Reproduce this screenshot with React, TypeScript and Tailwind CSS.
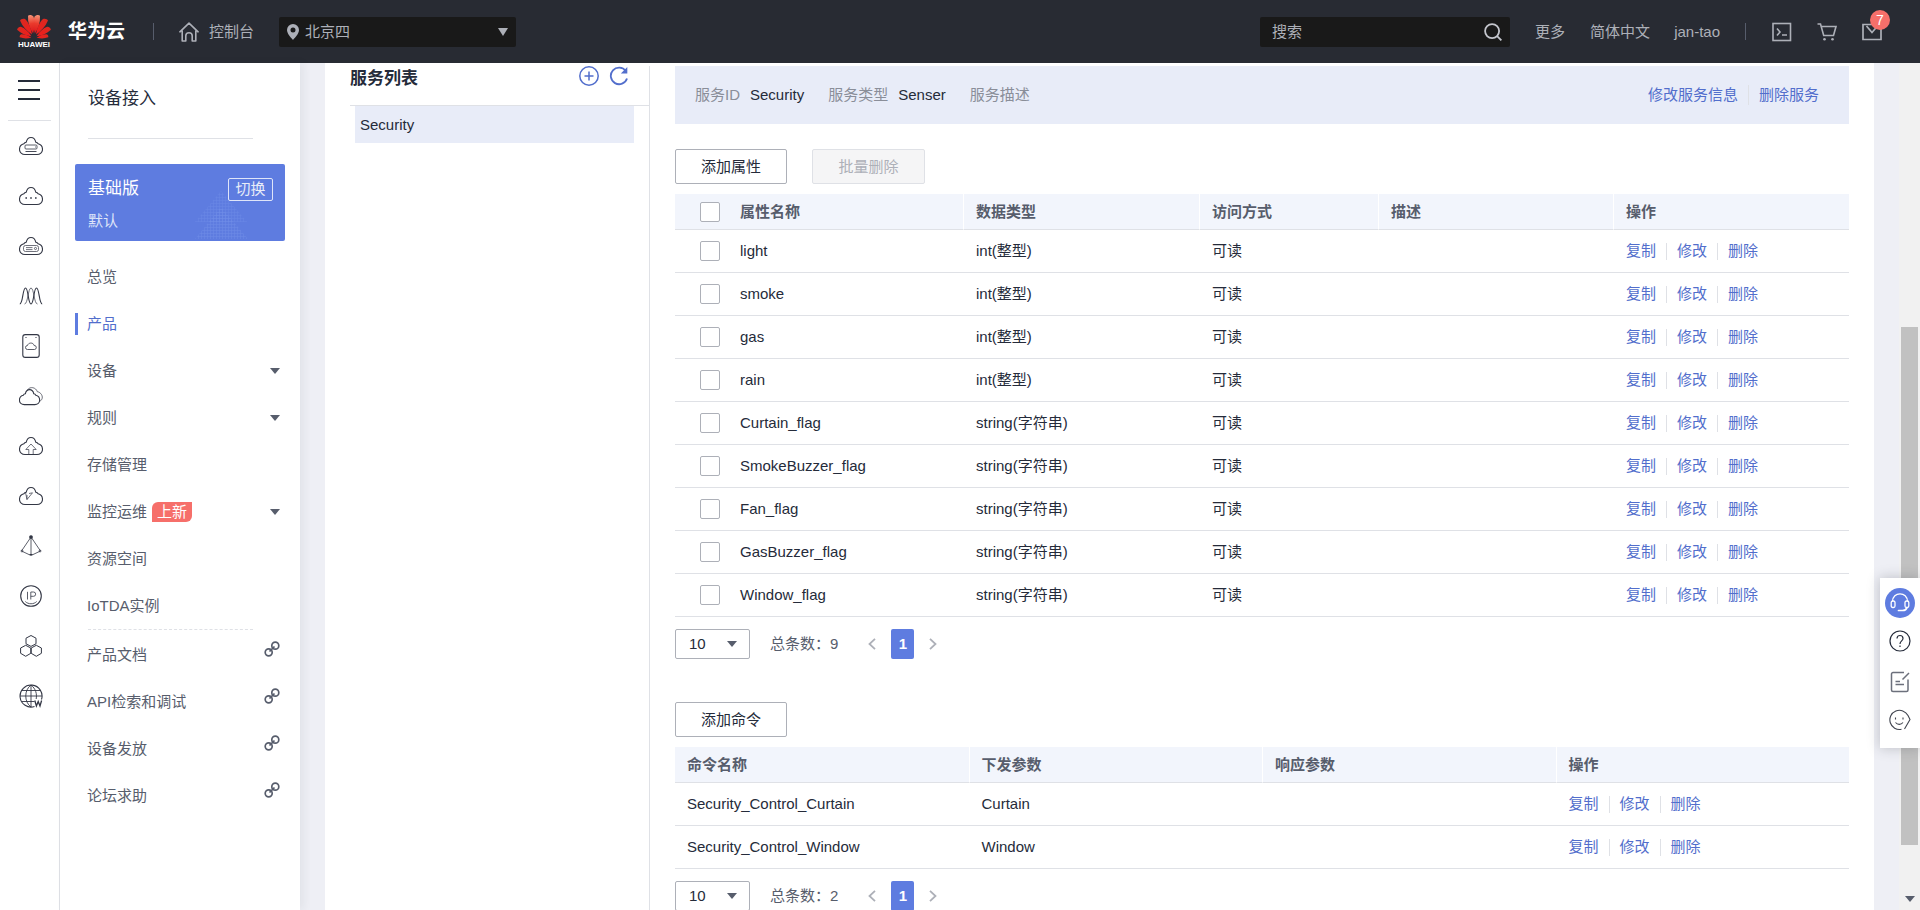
import { useState } from "react";
import type { ReactNode } from "react";

type NavItem = { label: string; active?: boolean; expandable?: boolean; badge?: string };
type Property = { name: string; type: string; access: string };
type Command = { name: string; params: string };

const navItems: NavItem[] = [
  { label: "总览" },
  { label: "产品", active: true },
  { label: "设备", expandable: true },
  { label: "规则", expandable: true },
  { label: "存储管理" },
  { label: "监控运维", badge: "上新", expandable: true },
  { label: "资源空间" },
  { label: "IoTDA实例" },
];

const externalLinks = ["产品文档", "API检索和调试", "设备发放", "论坛求助"];

const properties: Property[] = [
  { name: "light", type: "int(整型)", access: "可读" },
  { name: "smoke", type: "int(整型)", access: "可读" },
  { name: "gas", type: "int(整型)", access: "可读" },
  { name: "rain", type: "int(整型)", access: "可读" },
  { name: "Curtain_flag", type: "string(字符串)", access: "可读" },
  { name: "SmokeBuzzer_flag", type: "string(字符串)", access: "可读" },
  { name: "Fan_flag", type: "string(字符串)", access: "可读" },
  { name: "GasBuzzer_flag", type: "string(字符串)", access: "可读" },
  { name: "Window_flag", type: "string(字符串)", access: "可读" },
];

const commands: Command[] = [
  { name: "Security_Control_Curtain", params: "Curtain" },
  { name: "Security_Control_Window", params: "Window" },
];

const CLOUD =
  "M6 17.5C3 17.5.5 15.4.5 12.4C.5 9.6 2.3 7.4 4.9 6.800C5.300 5.900 6.100 5.300 7.200 5.200C7.800 2.400 9.800.5 12 .5C14.200.5 16.200 2.400 16.800 5.200C17.900 5.300 18.700 5.900 19.100 6.800C21.700 7.400 23.500 9.600 23.500 12.400C23.500 15.400 21 17.500 18 17.500Z";

function Glyph({ children, box = "0 0 24 18" }: { children: ReactNode; box?: string }) {
  return (
    <svg viewBox={box} className="h-6 w-6" fill="none" stroke="#333745" strokeWidth="1.1" aria-hidden="true">
      {children}
    </svg>
  );
}

const railIcons: { label: string; icon: ReactNode }[] = [
  {
    label: "弹性云服务器",
    icon: (
      <Glyph>
        <path d={CLOUD} />
        <rect x="6" y="8" width="12" height="4" rx="1" strokeWidth=".8" />
        <path d="M16 10h.8M6.500 14.500h11" strokeWidth=".9" />
      </Glyph>
    ),
  },
  {
    label: "云容器",
    icon: (
      <Glyph>
        <path d={CLOUD} />
        <path d="M6.400 11h1.600M11.200 11h1.600M16 11h1.600" strokeWidth="1.700" />
      </Glyph>
    ),
  },
  {
    label: "裸金属服务器",
    icon: (
      <Glyph>
        <path d={CLOUD} />
        <rect x="4.500" y="8.500" width="15" height="6" rx="2" strokeWidth=".7" />
        <path d="M7 10.600h6.500M7 12.600h6.500" strokeWidth=".7" />
        <circle cx="16.500" cy="11.500" r="1.100" strokeWidth=".7" />
      </Glyph>
    ),
  },
  {
    label: "弹性伸缩",
    icon: (
      <Glyph>
        <path d="M.8 17C4 17 3.600 1 6.500 1S9 17 12 17S14.600 1 17.500 1S20 17 23.200 17" />
        <path d="M5.500 17C9 17 9 1 12 1S15 17 18.500 17" strokeWidth=".7" />
      </Glyph>
    ),
  },
  {
    label: "云硬盘",
    icon: (
      <Glyph box="0 0 24 24">
        <rect x="3.800" y=".6" width="16.400" height="22.800" rx="2.500" />
        <path d="M8.500 15.500a2 2 0 0 1 0-4c.6-3 5.800-3.500 6.600 0a2 2 0 0 1 .4 4Z" strokeWidth=".8" />
        <path d="M6.500 3.500h1M16.500 3.500h1" />
      </Glyph>
    ),
  },
  {
    label: "云备份",
    icon: (
      <Glyph>
        <g transform="translate(0 2.200) scale(.88)">
          <path d={CLOUD} strokeWidth="1.250" />
        </g>
        <path d="M8.500 2.800C11-.8 17 .2 18.300 4.700C22 5.200 24.400 9.500 22.800 12.300C22.400 13.200 21.800 13.700 21.200 14" strokeWidth=".7" />
      </Glyph>
    ),
  },
  {
    label: "对象存储",
    icon: (
      <Glyph>
        <path d={CLOUD} />
        <path d="M9.800 17v-4.500H6.800L12 7l5.200 5.500h-3V17" strokeWidth=".7" />
      </Glyph>
    ),
  },
  {
    label: "云监控",
    icon: (
      <Glyph>
        <path d={CLOUD} />
        <path d="M6.500 5.500L8 12.500L13.500 5.800L10 6.500M8 12.500V8" strokeWidth=".7" />
      </Glyph>
    ),
  },
  {
    label: "虚拟私有云",
    icon: (
      <Glyph box="0 0 24 24">
        <path d="M12 3v18M12 3L2.500 17L12 21.500L21.500 17L12 3" strokeWidth=".8" />
        <circle cx="12" cy="3" r="1.300" fill="#333745" />
        <circle cx="3" cy="17" r="1" strokeWidth=".7" />
        <circle cx="21" cy="17" r="1" strokeWidth=".7" />
        <path d="M10.500 20.500h3" />
      </Glyph>
    ),
  },
  {
    label: "弹性公网",
    icon: (
      <Glyph box="0 0 24 24">
        <circle cx="12" cy="12" r="10.300" />
        <path d="M8.500 7.800v7.700M11.800 15.500V8H14.500a2 2 0 0 1 0 4.300H11.800M6.300 17.500C9.200 20.500 14.800 20.500 17.700 17.500" strokeWidth=".8" />
      </Glyph>
    ),
  },
  {
    label: "区块链",
    icon: (
      <Glyph box="0 0 24 24">
        <path
          d="M12 1.500L17 4.200V9.800L12 12.400L7 9.800V4.200ZM6.700 11.300L11.800 14V19.300L6.700 22.300L1.600 19.300V14ZM17.300 11.300L12.200 14V19.300L17.300 22.300L22.400 19.300V14Z"
          strokeLinejoin="round"
          strokeWidth="1"
        />
      </Glyph>
    ),
  },
  {
    label: "域名",
    icon: (
      <Glyph box="0 0 24 24">
        <path d="M15.500 22.500A11 11 0 1 1 22.500 15.500" />
        <path d="M12 1v22M1 12h22M3 6.500h18M3 17.500h12.500M12 1C5 6 5 18 12 23M12 1C17 5 18 10 17.200 15" strokeWidth=".9" />
        <path d="M15.800 16.500l1.600 5.500l1.800-4.500l1.800 4.500l1.600-5.500" strokeWidth="1.300" />
      </Glyph>
    ),
  },
];

function Caret({ className = "" }: { className?: string }) {
  return (
    <svg viewBox="0 0 10 6" className={`h-1.5 w-2.5 fill-[#575d6c] ${className}`} aria-hidden="true">
      <path d="M0 0h10L5 6Z" />
    </svg>
  );
}

function LinkIcon() {
  return (
    <svg viewBox="0 0 16 16" className="mt-2.5 size-4 self-start" fill="none" stroke="#575d6c" strokeWidth="1.700" aria-hidden="true">
      <circle cx="11.300" cy="4.700" r="3.500" />
      <circle cx="4.700" cy="11.300" r="3.500" />
      <path d="M5.500 10.500l5-5" />
    </svg>
  );
}

function Logo() {
  const petal = "M0 -2C-2.600 -8 -3.500 -14 -2.700 -18.500C-1.800 -20.500 .6 -21.400 1.900 -20.400C3.100 -14 2.400 -8 0 -2Z";
  return (
    <a href="#home" className="flex w-9 flex-col items-center gap-0.5 font-bold">
      <svg viewBox="0 0 34 25" className="h-[25px] w-[34px]" aria-hidden="true">
        <defs>
          <linearGradient id="petalTop" gradientUnits="userSpaceOnUse" x1="0" y1="-22" x2="0" y2="-2">
            <stop offset="0" stopColor="#f7a283" />
            <stop offset=".5" stopColor="#ea3a2c" />
            <stop offset="1" stopColor="#d8141a" />
          </linearGradient>
          <linearGradient id="petalSide" gradientUnits="userSpaceOnUse" x1="0" y1="-22" x2="0" y2="-2">
            <stop offset="0" stopColor="#d92a20" />
            <stop offset="1" stopColor="#f01c1c" />
          </linearGradient>
        </defs>
        {[1, -1].map((side) => (
          <g key={side} transform={`translate(17 23) scale(${side} 1)`} fill="url(#petalSide)">
            <path d={petal} transform="translate(.6 -1.500) rotate(9) scale(1.150 1)" fill="url(#petalTop)" />
            <path d={petal} transform="translate(1 -1) rotate(34) scale(1.100 .98)" />
            <path d={petal} transform="translate(1.200 0) rotate(59) scale(1 .84)" />
            <path d={petal} transform="translate(1.500 .8) rotate(82) scale(.7 .62)" />
          </g>
        ))}
      </svg>
      <span className="text-[8px] leading-2 text-white">HUAWEI</span>
    </a>
  );
}

function Header() {
  return (
    <header className="flex h-[63px] shrink-0 items-center bg-[#282b33] pl-4 text-[#adb0b8]">
      <Logo />
      <a href="#cloud" className="ml-4 text-[19px] font-bold text-white">
        华为云
      </a>
      <span className="ml-7 h-[17px] w-px bg-[#575d6c]" />
      <a href="#console" className="ml-[25px] flex items-center gap-2.5">
        <svg viewBox="0 0 20 20" className="size-5" fill="none" stroke="#adb0b8" strokeWidth="1.600" strokeLinejoin="round" strokeLinecap="round" aria-hidden="true">
          <path d="M.9 9.800L10 1.200l9.100 8.600M3.200 9v10h3.600v-5.200c0-4 6.400-4 6.400 0V19h3.600V9" />
        </svg>
        控制台
      </a>
      <label className="relative ml-[25px] flex h-[30px] w-[237px] items-center rounded-xs bg-[#191919] pl-2">
        <svg viewBox="0 0 12 16" className="h-4 w-3 shrink-0 fill-[#adb0b8]" aria-hidden="true">
          <path fillRule="evenodd" d="M6 0a6 6 0 0 1 6 6c0 3.500-3.500 7-6 10C3.500 13 0 9.500 0 6a6 6 0 0 1 6-6Zm0 3.500a2.500 2.500 0 1 0 0 5a2.500 2.500 0 0 0 0-5Z" />
        </svg>
        <select aria-label="区域" className="h-full w-full appearance-none bg-transparent pl-1.5 outline-none">
          <option>北京四</option>
        </select>
        <svg viewBox="0 0 10 8" className="pointer-events-none absolute right-2 h-2 w-2.5 fill-[#adb0b8]" aria-hidden="true">
          <path d="M0 0h10L5 8Z" />
        </svg>
      </label>

      <div className="ml-auto flex h-[30px] w-[250px] items-center rounded-xs bg-[#191919] pr-2 pl-3">
        <input aria-label="搜索" placeholder="搜索" className="min-w-0 flex-1 bg-transparent outline-none placeholder:text-[#adb0b8]" />
        <button aria-label="开始搜索">
          <svg viewBox="0 0 20 20" className="size-[18px]" fill="none" stroke="#c4c6cd" strokeWidth="2" aria-hidden="true">
            <circle cx="9" cy="9" r="7.800" />
            <path d="M14.300 14.300l5 5" />
          </svg>
        </button>
      </div>
      <a href="#more" className="ml-[25px]">更多</a>
      <a href="#lang" className="ml-[25px]">简体中文</a>
      <a href="#account" className="ml-6">jan-tao</a>
      <span className="ml-[25px] h-[17px] w-px bg-[#575d6c]" />
      <div className="mr-[38px] ml-[26px] flex items-center gap-[25px]">
        <button aria-label="命令行">
          <svg viewBox="0 0 20 20" className="size-5" fill="none" stroke="#adb0b8" strokeWidth="1.600" aria-hidden="true">
            <rect x="1" y="1.500" width="17.500" height="17" />
            <path d="M5 6.500l3 3.500l-3 3.500M10 13h5" />
          </svg>
        </button>
        <button aria-label="购物车">
          <svg viewBox="0 0 20 18" className="h-[18px] w-5" fill="none" stroke="#adb0b8" strokeWidth="1.600" aria-hidden="true">
            <path d="M.5 1h3l3.200 11.500h9.800L19 3.500H4.500" />
            <circle cx="7.500" cy="16.300" r="1.300" fill="#adb0b8" stroke="none" />
            <circle cx="15.500" cy="16.300" r="1.300" fill="#adb0b8" stroke="none" />
          </svg>
        </button>
        <button aria-label="消息" className="relative">
          <svg viewBox="0 0 20 18" className="h-[18px] w-5" fill="none" stroke="#adb0b8" strokeWidth="1.700" aria-hidden="true">
            <path d="M1 1.500h18v15H1ZM4.500 3L10 9.500l5.500-6.500" />
          </svg>
          <span className="absolute -top-[13px] left-2 size-5 rounded-full bg-[#f66f6a] text-sm leading-5 text-white">7</span>
        </button>
      </div>
    </header>
  );
}

function Rail() {
  return (
    <nav aria-label="服务" className="flex w-[60px] shrink-0 flex-col items-center border-r border-[#dfe1e6] bg-white">
      <button aria-label="菜单" className="mt-[17px] mr-0.5 flex flex-col gap-[7px]">
        <span className="h-0.5 w-[22px] bg-[#252b3a]" />
        <span className="h-0.5 w-[22px] bg-[#252b3a]" />
        <span className="h-0.5 w-[22px] bg-[#252b3a]" />
      </button>
      <div className="mt-5 h-px w-[43px] bg-[#dfe1e6]" />
      <div className="flex flex-col pl-[3px]">
        {railIcons.map((item) => (
          <a key={item.label} href="#service" aria-label={item.label} className="flex h-[50px] items-center">
            {item.icon}
          </a>
        ))}
      </div>
    </nav>
  );
}

function Sidebar() {
  return (
    <aside className="z-10 flex w-60 shrink-0 flex-col bg-white text-[#575d6c] shadow-[4px_0_8px_rgba(40,43,51,0.06)]">
      <h1 className="mx-7 h-[75px] pt-6 text-[17px] leading-6 text-[#252b3a]">设备接入</h1>
      <div className="ml-7 h-px w-[165px] bg-[#dfe1e6]" />
      <section className="relative mx-[15px] mt-[25px] mb-3 h-[77px] overflow-hidden rounded-xs bg-[#5e7ce0] px-[13px] pt-[13px] text-white">
        <svg viewBox="0 0 54 50" className="absolute right-[36px] bottom-0 h-[50px] w-[54px]" aria-hidden="true">
          <defs>
            <pattern id="mesh" width="3" height="3" patternUnits="userSpaceOnUse">
              <path d="M0 .5h3M.5 0v3" stroke="#7390e8" strokeWidth=".5" />
            </pattern>
          </defs>
          <path d="M26 0L52 31H0Z" fill="url(#mesh)" opacity=".6" />
          <path d="M26 16L53 48H0Z" fill="url(#mesh)" opacity=".75" />
        </svg>
        <div className="relative flex items-center justify-between">
          <span className="text-[17px] leading-6">基础版</span>
          <button className="mr-[-1px] h-[23px] w-[45px] rounded-xs border border-[#dfe5f9] leading-5 text-[#e8ecf8]">切换</button>
        </div>
        <p className="relative mt-2.5 leading-5 text-[#dfe5f9]">默认</p>
      </section>
      <nav aria-label="设备接入">
        {navItems.map((item) => (
          <a key={item.label} href="#nav" className={`flex h-[47px] items-center px-[15px] ${item.active ? "text-[#526ecc]" : ""}`}>
            <span className={`h-[22px] w-[3px] ${item.active ? "bg-[#5e7ce0]" : ""}`} />
            <span className="ml-[9px]">{item.label}</span>
            {item.badge && (
              <span className="ml-[5px] h-5 w-10 rounded-tl-md rounded-br-md bg-[#f66f6a] text-center leading-5 text-white">{item.badge}</span>
            )}
            {item.expandable && <Caret className="mr-[5px] ml-auto" />}
          </a>
        ))}
      </nav>
      <div className="mb-px ml-7 w-[165px] border-t border-dashed border-[#dfe1e6]" />
      <nav aria-label="相关链接">
        {externalLinks.map((label) => (
          <a key={label} href="#doc" className="flex h-[47px] items-center justify-between pr-5 pl-[27px]">
            {label}
            <LinkIcon />
          </a>
        ))}
      </nav>
    </aside>
  );
}

function ServiceList() {
  return (
    <section className="w-[325px] shrink-0 border-r border-[#dfe1e6] pl-[25px]">
      <div className="flex h-10 items-start border-b border-[#dfe1e6]">
        <h2 className="mr-auto text-[17px] leading-[26px] font-bold text-[#252b3a]">服务列表</h2>
        <button aria-label="添加服务">
          <svg viewBox="0 0 20 20" className="size-5" fill="none" stroke="#526ecc" strokeWidth="1.500" aria-hidden="true">
            <circle cx="10" cy="10" r="9.200" />
            <path d="M10 5.500v9M5.500 10h9" />
          </svg>
        </button>
        <button aria-label="刷新" className="mr-5 ml-2.5">
          <svg viewBox="0 0 20 20" className="size-5" fill="none" stroke="#526ecc" strokeWidth="1.800" aria-hidden="true">
            <path d="M16.800 5A8.300 8.300 0 1 0 18 12.500" />
            <path d="M18.300 1v6.500h-6.500Z" fill="#526ecc" stroke="none" />
          </svg>
        </button>
      </div>
      <button className="ml-[5px] block h-[37px] w-[279px] bg-[#e8ecf8] pl-[5px] text-left">Security</button>
    </section>
  );
}

function RowActions() {
  return (
    <div className="flex items-center text-[#526ecc]">
      <button>复制</button>
      <span className="mx-2.5 h-[17px] w-px bg-[#dfe1e6]" />
      <button>修改</button>
      <span className="mx-2.5 h-[17px] w-px bg-[#dfe1e6]" />
      <button>删除</button>
    </div>
  );
}

function Checkbox({ label }: { label: string }) {
  return (
    <input
      type="checkbox"
      aria-label={label}
      className="block size-5 appearance-none rounded-xs border border-[#adb0b8] bg-white checked:bg-[#5e7ce0]"
    />
  );
}

function Th({ children, first = false }: { children?: ReactNode; first?: boolean }) {
  return (
    <th className={`h-9 border-b border-[#dfe1e6] bg-[#f2f5fc] text-left font-bold text-[#575d6c] ${first ? "" : "border-l border-l-white pl-3"}`}>
      {children}
    </th>
  );
}

function Td({ children, className = "pl-[13px]" }: { children?: ReactNode; className?: string }) {
  return <td className={`h-[43px] border-b border-[#dfe1e6] ${className}`}>{children}</td>;
}

function Pagination({ total, name }: { total: number; name: string }) {
  const [size, setSize] = useState("10");
  return (
    <div className="mt-3 flex shrink-0 items-center text-[#575d6c]">
      <label className="relative flex items-center">
        <select
          aria-label={`${name}每页条数`}
          value={size}
          onChange={(e) => setSize(e.target.value)}
          className="h-[30px] w-[75px] appearance-none rounded-xs border border-[#adb0b8] bg-white pl-[13px] text-[#252b3a]"
        >
          <option>10</option>
          <option>20</option>
          <option>50</option>
        </select>
        <Caret className="pointer-events-none absolute right-[13px]" />
      </label>
      <span className="ml-5">总条数：{total}</span>
      <button aria-label="上一页" className="ml-[30px]">
        <svg viewBox="0 0 8 12" className="h-3 w-2" fill="none" stroke="#adb0b8" strokeWidth="1.800" aria-hidden="true">
          <path d="M7 .8L1.500 6L7 11.200" />
        </svg>
      </button>
      <button className="mx-[15px] h-[30px] w-[23px] rounded-xs bg-[#5e7ce0] font-bold text-white">1</button>
      <button aria-label="下一页">
        <svg viewBox="0 0 8 12" className="h-3 w-2" fill="none" stroke="#adb0b8" strokeWidth="1.800" aria-hidden="true">
          <path d="M1 .8L6.500 6L1 11.200" />
        </svg>
      </button>
    </div>
  );
}

function ServiceDetail() {
  return (
    <section className="flex min-w-0 flex-1 flex-col px-[25px]">
      <div className="flex h-[58px] shrink-0 items-center bg-[#e8ecf8] pr-[30px] pl-5 text-[#8a8e99]">
        <span>服务ID</span>
        <span className="ml-2.5 text-[#252b3a]">Security</span>
        <span className="ml-6">服务类型</span>
        <span className="ml-2.5 text-[#252b3a]">Senser</span>
        <span className="ml-6">服务描述</span>
        <div className="ml-auto flex items-center text-[#526ecc]">
          <button>修改服务信息</button>
          <span className="mx-2.5 h-5 w-px bg-[#dfe1e6]" />
          <button>删除服务</button>
        </div>
      </div>

      <div className="mt-[25px] flex shrink-0 gap-[25px]">
        <button className="h-[35px] w-28 rounded-xs border border-[#adb0b8] bg-white">添加属性</button>
        <button disabled className="h-[35px] w-[113px] rounded-xs border border-[#dfe1e6] bg-[#f5f5f6] text-[#adb0b8]">
          批量删除
        </button>
      </div>
      <table className="mt-2.5 w-full table-fixed border-separate border-spacing-0">
        <colgroup>
          <col className="w-[65px]" />
          <col className="w-[223px]" />
          <col className="w-[236px]" />
          <col className="w-[179px]" />
          <col className="w-[235px]" />
          <col className="w-[236px]" />
        </colgroup>
        <thead>
          <tr>
            <Th first>
              <span className="block pl-[25px]">
                <Checkbox label="全选" />
              </span>
            </Th>
            <Th first>属性名称</Th>
            <Th>数据类型</Th>
            <Th>访问方式</Th>
            <Th>描述</Th>
            <Th>操作</Th>
          </tr>
        </thead>
        <tbody>
          {properties.map((p) => (
            <tr key={p.name}>
              <Td className="pl-[25px]">
                <Checkbox label={p.name} />
              </Td>
              <Td className="pl-0">{p.name}</Td>
              <Td>{p.type}</Td>
              <Td>{p.access}</Td>
              <Td />
              <Td>
                <RowActions />
              </Td>
            </tr>
          ))}
        </tbody>
      </table>
      <Pagination total={9} name="属性" />

      <button className="mt-[43px] h-[35px] w-28 shrink-0 rounded-xs border border-[#adb0b8] bg-white">添加命令</button>
      <table className="mt-2.5 w-full table-fixed border-separate border-spacing-0">
        <thead>
          <tr>
            <Th first>
              <span className="pl-3">命令名称</span>
            </Th>
            <Th>下发参数</Th>
            <Th>响应参数</Th>
            <Th>操作</Th>
          </tr>
        </thead>
        <tbody>
          {commands.map((c) => (
            <tr key={c.name}>
              <Td className="pl-3">{c.name}</Td>
              <Td>{c.params}</Td>
              <Td />
              <Td>
                <RowActions />
              </Td>
            </tr>
          ))}
        </tbody>
      </table>
      <Pagination total={2} name="命令" />
    </section>
  );
}

function Scrollbar() {
  return (
    <div className="flex w-[21px] shrink-0 flex-col items-center bg-[#f1f1f1]" aria-hidden="true">
      <div className="mt-[264px] h-[518px] w-[17px] bg-[#c1c1c1]" />
      <Caret className="mt-auto mb-2" />
    </div>
  );
}

function HelpDock() {
  return (
    <aside aria-label="帮助" className="fixed top-[578px] right-0 z-20 flex h-[170px] w-10 flex-col items-center bg-white pt-2.5 shadow-[0_0_12px_rgba(40,43,51,0.25)]">
      <button aria-label="在线客服" className="flex size-[30px] items-center justify-center rounded-full bg-[#5e7ce0]">
        <svg viewBox="0 0 20 20" className="size-5" fill="none" stroke="#fff" strokeWidth="1.300" aria-hidden="true">
          <path d="M2.500 8.500C2.500-1.800 17.500-1.800 17.500 8.500" />
          <rect x="1.200" y="8" width="3.800" height="6.500" rx="1.500" />
          <rect x="15" y="8" width="3.800" height="6.500" rx="1.500" />
          <path d="M17 14.500C16.500 16.500 14.500 17.500 12.500 17.500M8.500 17.500h4" strokeWidth="1.700" strokeLinecap="round" />
        </svg>
      </button>
      <button aria-label="帮助" className="mt-3">
        <svg viewBox="0 0 22 22" className="size-[22px]" fill="none" stroke="#252b3a" strokeWidth="1.200" aria-hidden="true">
          <circle cx="11" cy="11" r="10" />
          <path d="M8 8.500C8 4.500 14 4.500 14 8.500C14 10.800 11 11 11 14M11 15.500v1.500" />
        </svg>
      </button>
      <button aria-label="建议" className="mt-[19px]">
        <svg viewBox="0 0 20 22" className="h-[22px] w-5" fill="none" stroke="#6c707c" strokeWidth="1.500" aria-hidden="true">
          <path d="M14 1.500H3a1.500 1.500 0 0 0-1.500 1.500V19A1.500 1.500 0 0 0 3 20.500H16.500A1.500 1.500 0 0 0 18 19V8.500M19 2L12.500 8.500M5.500 10.500h4.500M5.500 13.500h8.500" />
        </svg>
      </button>
      <button aria-label="评价" className="mt-4">
        <svg viewBox="0 0 22 22" className="size-[22px]" fill="none" stroke="#40444f" strokeWidth="1.100" aria-hidden="true">
          <path d="M12.500 20.300A9.600 9.600 0 1 1 19 6.500L21 10.500L15.500 20" />
          <path d="M6.500 8.500v2M14 8.500v2M6.500 13.500C8.500 16 12 16 14 13.500" />
        </svg>
      </button>
    </aside>
  );
}

export default function App() {
  return (
    <div className="flex h-screen flex-col overflow-hidden bg-[#eeeff5] font-['Liberation_Sans','Noto_Sans_CJK_SC',sans-serif] text-[15px] leading-5 text-[#252b3a]">
      <Header />
      <div className="flex min-h-0 flex-1">
        <Rail />
        <Sidebar />
        <main className="mr-[25px] ml-[25px] flex min-w-0 flex-1 overflow-hidden bg-white pt-[3px]">
          <ServiceList />
          <ServiceDetail />
        </main>
        <Scrollbar />
      </div>
      <HelpDock />
    </div>
  );
}
